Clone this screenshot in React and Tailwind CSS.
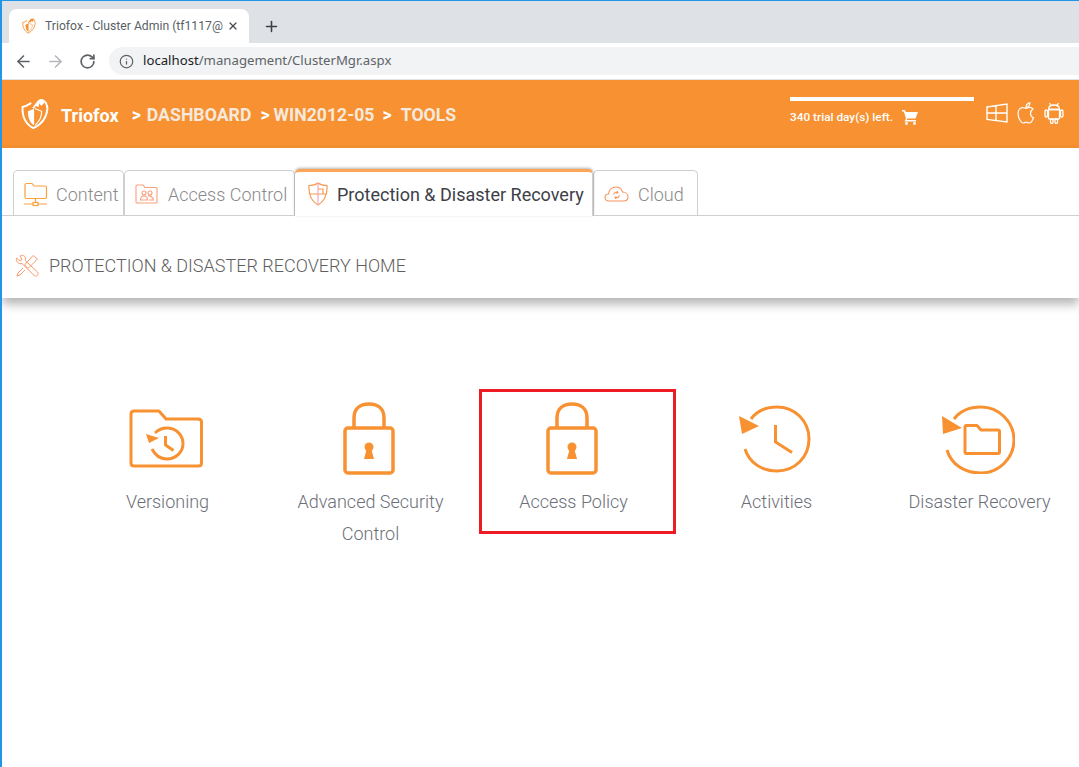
import { ArrowLeft, ArrowRight, RotateCw, Info, X, Plus } from "lucide-react";

const orange = "#f79131";

function TrioLogo({ size = 32, color = "#fff", sw = 2.2 }) {
  return (
    <svg width={size} height={size} viewBox="0 0 32 36" fill="none" stroke={color} strokeWidth={sw} strokeLinecap="round">
      <path d="M11 6C8 8 5 9.500 2 10c-.5 10 3 19 12 24 9-4 15-12 16-22 0-3-1-5-2-7" />
      <path d="M8 15l7-3v19c-5-3-7-9-7-16z" fill={color} stroke="none" />
      <path d="M16.500 12l7 3c0 6-2 11-7 15" strokeWidth={sw * 0.6} />
      <path d="M13 11l6-8c3-3 7-2 9 1l-5 5-2-3-1 4-3-1-2 3z" fill={color} stroke="none" />
    </svg>
  );
}

function WindowsIcon() {
  return (
    <svg width="22" height="20" viewBox="0 0 22 20" fill="none" stroke="#fff" strokeWidth="1.400">
      <path d="M1 4l20-3v18L1 16.500zM10 2.700v15.300M1 10h20" />
    </svg>
  );
}

function AppleIcon() {
  return (
    <svg width="18" height="22" viewBox="0 0 18 22" fill="none" stroke="#fff" strokeWidth="1.200">
      <path d="M16 7c-1-1-2.500-1.700-4-1.500-1.300.2-2 .8-3 .8s-2-.8-3.300-.7C3 5.800 1 8.300 1 11.500 1 15.500 3.800 21 6.300 21c1.200 0 1.700-.8 2.900-.8s1.700.8 3 .8c1.800 0 3.500-3 4.300-5.300-2-.8-3-2.500-3-4.300 0-2 1-3.500 2.500-4.400z" />
      <path d="M9 5.500c0-2.500 1.500-4.300 3.800-4.700 0 2.500-1.500 4.500-3.800 4.700z" />
    </svg>
  );
}

function AndroidIcon() {
  return (
    <svg width="20" height="22" viewBox="0 0 20 22" fill="none" stroke="#fff" strokeWidth="1.300">
      <path d="M4.500 7.500C4.500 4.500 7 3 10 3s5.500 1.500 5.500 4.500z" />
      <path d="M7 3.500 5.500 1M13 3.500 14.500 1" />
      <rect x="4.500" y="7.500" width="11" height="9.500" rx="1" />
      <rect x="1" y="8" width="2.500" height="7" rx="1.200" />
      <rect x="16.500" y="8" width="2.500" height="7" rx="1.200" />
      <rect x="6.500" y="17" width="2.500" height="4.500" rx="1.200" />
      <rect x="11" y="17" width="2.500" height="4.500" rx="1.200" />
    </svg>
  );
}

function CartIcon() {
  return (
    <svg width="16" height="15" viewBox="0 0 16 15" fill="#fff">
      <path d="M0 0h3l.8 2H16l-2.500 6.500H5.300l-.6 1.500H14v1.500H2.500l1.500-3L1.800 1.500H0z" />
      <circle cx="4.500" cy="13.500" r="1.400" />
      <circle cx="12.500" cy="13.500" r="1.400" />
    </svg>
  );
}

function ContentIcon() {
  return (
    <svg width="24" height="25" viewBox="0 0 24 25" fill="none" stroke="#f9a03f" strokeWidth="1.200">
      <path d="M1 3c0-1 .5-1.500 1.500-1.500H8L10 4h11c1 0 1.500.5 1.500 1.500V15c0 1-.5 1.500-1.500 1.500H2.500C1.500 16.500 1 16 1 15z" />
      <path d="M11.500 16.500v4M0 22h9M14 22h9" />
      <rect x="9" y="20.500" width="5" height="3" />
    </svg>
  );
}

function AccessIcon() {
  return (
    <svg width="24" height="20" viewBox="0 0 24 20" fill="none" stroke="#f9a07c" strokeWidth="1.100">
      <path d="M1 2c0-.7.3-1 1-1h6l2 2.500h11c.7 0 1 .3 1 1V18c0 .7-.3 1-1 1H2c-.7 0-1-.3-1-1z" />
      <circle cx="9" cy="9" r="2" />
      <circle cx="15" cy="9" r="2" />
      <path d="M5.500 16c0-2.500 1.500-4 3.500-4s3.500 1.500 3.500 4zM13 12c2.500-.5 5 1 5.500 4H14" />
    </svg>
  );
}

function ShieldIcon() {
  return (
    <svg width="20" height="24" viewBox="0 0 20 24" fill="none" stroke="#f79a55" strokeWidth="1.200">
      <path d="M10 1c2 1.500 5 2.500 9 2.500 .5 9-2.500 16-9 19.500C3.500 19.500 .5 12.500 1 3.500 5 3.500 8 2.500 10 1z" />
      <path d="M10 1v22" stroke="#f5a8c0" />
      <path d="M1 12h18M10 7h5v5" />
    </svg>
  );
}

function CloudIcon() {
  return (
    <svg width="25" height="16" viewBox="0 0 25 16" fill="none" stroke="#f7935c" strokeWidth="1.100">
      <path d="M5 15C2.500 15 1 13.500 1 11.500S2.500 8 4.500 8C5 4 8 1 12 1c3 0 5.500 2 6.500 5 3.500 0 5.500 2.500 5.500 5s-2 4-4.500 4z" />
      <path d="M9.500 8.500c.5-1.500 2-2.500 3.500-2.200M15.500 9.500c-.5 1.500-2 2.500-3.500 2.200M13 5l1 1.500-1.500 1M12 13l-1-1.500 1.500-1" />
    </svg>
  );
}

function ToolsIcon() {
  return (
    <svg width="24" height="24" viewBox="0 0 24 24" fill="none" stroke="#f79a6c" strokeWidth="1">
      <path d="M1.500 4 5 7l2-1.500L5 2C7 .5 10 1.500 10.500 4c.2 1 0 1.700-.3 2.500L22.500 18c.8 1 .8 2.500 0 3.300-1 1-2.500 1-3.500 0L7 9.500C4 10.500.5 8 1.500 4z" />
      <path d="M18 1.500 22.500 5 13 14.500 9.500 11zM8 14 3 19l-1 3 3-1 5-5" />
    </svg>
  );
}

function FolderHistory() {
  return (
    <svg width="74" height="60" viewBox="0 0 74 60" fill="none" stroke={orange} strokeWidth="3" strokeLinejoin="round">
      <path d="M2 5c0-2 1-3 3-3h25l7 8h32c2.500 0 3.500 1 3.500 3v41c0 2-1 3-3 3H5c-2 0-3-1-3-3z" />
      <path d="M26 24c3-3 7-5 12-5 9 0 16 7 16 15.500S47 50 38 50c-7 0-12-4-15-10" />
      <path d="M36.500 27v9l8 5.500" />
      <path d="M17 25l13 4-10 5z" fill={orange} stroke="none" />
    </svg>
  );
}

function LockIcon() {
  return (
    <svg width="52" height="73" viewBox="0 0 52 73" fill="none" stroke={orange} strokeWidth="3.500" strokeLinejoin="round">
      <path d="M11 26V16C11 7 17 2 26 2s15 5 15 14v10" />
      <rect x="2" y="26" width="48" height="45" rx="3" />
      <circle cx="26" cy="45" r="4.500" fill={orange} stroke="none" />
      <path d="M24 46h4l3 11H21z" fill={orange} stroke="none" />
    </svg>
  );
}

function ClockBack() {
  return (
    <svg width="72" height="70" viewBox="0 0 72 70" fill="none" stroke={orange} strokeWidth="3">
      <path d="M12 15C18 7 27 3 38 3c18 0 32 14 32 32S56 67 38 67C22 67 10 58 6 45" />
      <path d="M36.500 21v17L53 48.500" />
      <path d="M0 12l20 10-17 8z" fill={orange} stroke="none" />
    </svg>
  );
}

function FolderBack() {
  return (
    <svg width="74" height="70" viewBox="0 0 74 70" fill="none" stroke={orange} strokeWidth="3" strokeLinejoin="round">
      <path d="M13 15C19 7 28 3 40 3c18 0 33 15 33 33S58 69 40 69C23 69 10 60 6 46" />
      <path d="M1 12l20 12-19 6z" fill={orange} stroke="none" />
      <path d="M24 23c0-1 .5-1.500 1.500-1.500H36l4 4.500h17c1 0 1.500.5 1.500 1.500V48c0 1-.5 1.500-1.500 1.500H25.500c-1 0-1.500-.5-1.500-1.500z" />
    </svg>
  );
}

const items = [
  { label: ["Versioning"], icon: <FolderHistory /> },
  { label: ["Advanced Security", "Control"], icon: <LockIcon /> },
  { label: ["Access Policy"], icon: <LockIcon />, selected: true },
  { label: ["Activities"], icon: <ClockBack /> },
  { label: ["Disaster Recovery"], icon: <FolderBack /> },
];

const tabBase =
  "flex items-center border border-b-0 border-[#cfcfcf] rounded-t-[5px] bg-white h-[45px] pt-[2px] text-[18px] text-[#8a8a8a] font-light";

export default function App() {
  return (
    <div className="min-h-[767px] bg-white border-l-2 border-t border-[#2196e8] overflow-hidden" style={{ fontFamily: "Roboto, sans-serif" }}>
      {/* browser chrome */}
      <div className="h-[42px] bg-[#dee1e6] flex items-end pl-[7px]">
        <div className="w-[240px] h-[34px] bg-white rounded-t-[8px] flex items-center pl-[12px] pr-[10px]">
          <TrioLogo size={16} color="#f79131" sw={2} />
          <span className="ml-[8px] whitespace-nowrap text-[12.200px] text-[#5a5f66]">Triofox - Cluster Admin (tf1117@</span>
          <X size={12} strokeWidth={2.500} className="ml-auto text-[#45494f]" />
        </div>
        <Plus size={17} strokeWidth={2.200} className="ml-[14px] mb-[8px] text-[#3c4043]" />
      </div>
      <div className="h-[37px] flex items-center border-b border-[#e3e3e3] pl-[12px]">
        <ArrowLeft size={19} className="text-[#5f6368]" />
        <ArrowRight size={19} className="ml-[13px] text-[#b4b6b9]" />
        <RotateCw size={17} strokeWidth={2.400} className="ml-[14px] text-[#5f6368]" />
        <div className="ml-[13px] flex-1 h-[28px] rounded-l-[14px] bg-[#f1f3f4] flex items-center pl-[10px]">
          <Info size={15} className="text-[#5f6368]" />
          <span className="ml-[9px] text-[13.200px] text-[#5f6368]" style={{ fontFamily: '"Noto Sans", sans-serif' }}>
            <span className="text-[#202124]">localhost</span>/management/ClusterMgr.aspx
          </span>
        </div>
      </div>

      {/* orange header */}
      <div className="h-[68px] bg-[#f79131] flex items-center pl-[17px] pr-[15px]">
        <TrioLogo size={32} />
        <span className="ml-[10px] pt-[2px] text-[18px] font-bold text-white">Triofox</span>
        <span className="ml-[13px] pt-[2px] text-[17.700px] font-bold text-white">&gt;</span>
        <span className="ml-[6px] pt-[2px] text-[17.700px] font-bold text-[#f5e9de]">DASHBOARD</span>
        <span className="ml-[9px] pt-[2px] text-[17.700px] font-bold text-white">&gt;</span>
        <span className="ml-[4px] pt-[2px] text-[17.700px] font-bold text-[#f5e9de]">WIN2012-05</span>
        <span className="ml-[8px] pt-[2px] text-[17.700px] font-bold text-white">&gt;</span>
        <span className="ml-[9px] pt-[2px] text-[17.700px] font-bold text-[#f5e9de]">TOOLS</span>
        <div className="ml-auto w-[184px] mb-[5px]">
          <div className="h-[4px] bg-white mb-[8px]" />
          <div className="flex items-center text-[11.800px] font-medium text-white">
            340 trial day(s) left.
            <span className="ml-[9px]"><CartIcon /></span>
          </div>
        </div>
        <div className="ml-[12px] flex items-center gap-[9px] mb-[2px]">
          <WindowsIcon />
          <AppleIcon />
          <AndroidIcon />
        </div>
      </div>

      {/* tabs and page title */}
      <div className="h-[150px] shadow-[0_6px_10px_rgba(0,0,0,0.3)] relative">
        <div className="h-[68px] flex items-end pl-[11px] border-b border-[#cfcfcf]">
          <div className={`${tabBase} w-[111px] pl-[10px] gap-[8px]`}>
            <ContentIcon />
            Content
          </div>
          <div className={`${tabBase} w-[171px] pl-[10px] gap-[9px]`}>
            <AccessIcon />
            Access Control
          </div>
          <div className="flex items-center gap-[9px] w-[298px] h-[47px] pl-[13px] bg-white rounded-t-[5px] border-t-[3px] border-[#fba556] border-r border-r-[#cfcfcf] text-[18px] text-[#3d4048] shadow-[0_-1px_3px_rgba(0,0,0,0.3)] translate-y-px">
            <ShieldIcon />
            Protection &amp; Disaster Recovery
          </div>
          <div className={`${tabBase} w-[105px] pl-[10px] gap-[9px]`}>
            <CloudIcon />
            Cloud
          </div>
        </div>
        <div className="h-[82px] flex items-center pl-[13px] gap-[10px] pt-[17px]">
          <ToolsIcon />
          <span className="text-[18px] font-light text-[#5f5f5f]">PROTECTION &amp; DISASTER RECOVERY HOME</span>
        </div>
      </div>

      {/* feature grid */}
      <div className="pl-[64px] pt-[104px] grid grid-cols-[repeat(5,203px)] items-start">
        {items.map((item) => (
          <div key={item.label[0]} className="relative flex flex-col items-center">
            <div className="h-[73px] pr-[4px] flex items-center justify-center">{item.icon}</div>
            <div className="mt-[11px] text-center text-[18px] leading-[32px] font-light text-[#6b6f78] whitespace-nowrap">
              {item.label.map((line) => (
                <div key={line}>{line}</div>
              ))}
            </div>
            {item.selected && (
              <div className="absolute left-[7px] top-[-13px] w-[197px] h-[145px] border-[3px] border-[#ed1c24]" />
            )}
          </div>
        ))}
      </div>
    </div>
  );
}
